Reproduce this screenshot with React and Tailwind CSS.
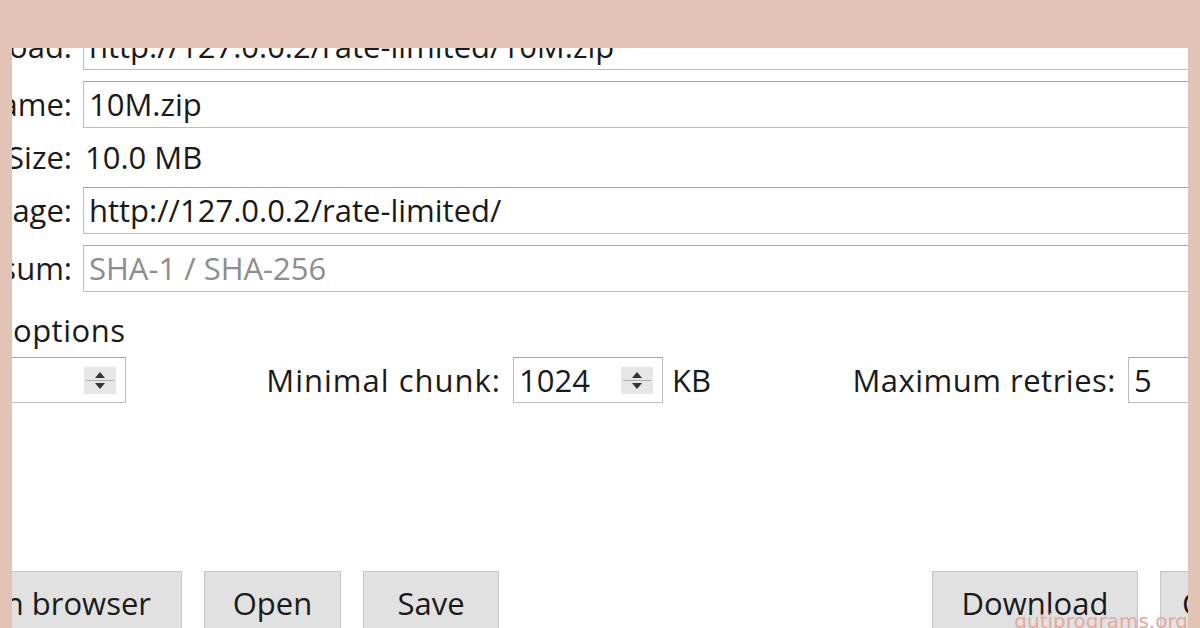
import React from 'react';

const font = { fontFamily: '"Open Sans", "Noto Sans", sans-serif' };

// little up/down arrows of a Windows spin box
const SpinArrows = () => (
  <svg width="32" height="27" viewBox="0 0 32 27" className="flex-none">
    <rect x="0" y="0" width="32" height="27" fill="#e6e6e6" />
    <line x1="2" y1="13.5" x2="30" y2="13.5" stroke="#b0b0b0" strokeWidth="1" />
    <path d="M11 11 L16 5 L21 11 Z" fill="#333" />
    <path d="M11 16 L21 16 L16 22 Z" fill="#333" />
  </svg>
);

const Field = ({ label, value, placeholder }) => (
  <div className="flex items-center h-[47px]">
    <div className="w-[160px] flex-none flex justify-end">
      <span className="whitespace-nowrap">{label}</span>
    </div>
    <div className="ml-[11px] flex-1 h-full flex items-center bg-white border border-[#bcbcbc] border-t-[#a5a5a5] pl-[5px]">
      {value ? (
        <span className="whitespace-nowrap text-[#1a1a1a]">{value}</span>
      ) : (
        <span className="whitespace-nowrap text-[#8d8d8d]">{placeholder}</span>
      )}
    </div>
  </div>
);

const SpinBox = ({ value, className }) => (
  <div className={`h-[46px] flex items-center justify-between border border-[#bcbcbc] border-t-[#a5a5a5] bg-white pl-[5px] pr-[9px] flex-none ${className}`}>
    <span className="text-[#1a1a1a]">{value}</span>
    <SpinArrows />
  </div>
);

const Button = ({ children, className }) => (
  <div className={`h-[70px] flex-none flex items-start pt-[16px] bg-[#e1e1e1] border border-[#c4c4c4] text-[#1a1a1a] ${className}`}>
    <span className="whitespace-nowrap">{children}</span>
  </div>
);

export default function App() {
  return (
    <div className="w-[1200px] h-[628px] bg-[#e1c4b6] flex flex-col overflow-hidden" style={font}>
      <div className="h-[48px] flex-none" />
      <div className="flex flex-1 min-h-0 w-[1200px]">
        <div className="w-[12px] flex-none" />
        <div className="relative flex-1 min-w-0 max-w-[1176px] h-full bg-white overflow-hidden text-[31px] leading-none text-[#1a1a1a]">
          <div className="w-[1400px] ml-[-100px] mt-[-25px] flex flex-col">
            <div className="flex flex-col gap-[11px]">
              <Field label="Download:" value="http://127.0.0.2/rate-limited/10M.zip" />
              <Field label="File name:" value="10M.zip" />
              <div className="flex items-center h-[37px]">
                <div className="w-[160px] flex-none flex justify-end">
                  <span className="whitespace-nowrap">Size:</span>
                </div>
                <span className="ml-[13px] whitespace-nowrap">10.0 MB</span>
              </div>
              <Field label="Page:" value="http://127.0.0.2/rate-limited/" />
              <Field label="Checksum:" placeholder="SHA-1 / SHA-256" />
            </div>

            {/* options group */}
            <div className="flex items-center h-[40px] mt-[18px]">
              <div className="w-[92px] flex-none flex justify-end">
                <span className="whitespace-nowrap">Advanced</span>
              </div>
              <span className="ml-[9px] whitespace-nowrap tracking-[0.5px]">options</span>
            </div>

            <div className="flex items-center mt-[7px]">
              <SpinBox value="8" className="w-[166px] ml-[48px]" />
              <div className="w-[375px] flex-none flex justify-end">
                <span className="whitespace-nowrap tracking-[1px]">Minimal chunk:</span>
              </div>
              <SpinBox value="1024" className="w-[150px] ml-[12px]" />
              <span className="ml-[9px] w-[40px] flex-none">KB</span>
              <div className="w-[404px] flex-none flex justify-end">
                <span className="whitespace-nowrap tracking-[0.5px]">Maximum retries:</span>
              </div>
              <SpinBox value="5" className="w-[150px] ml-[12px]" />
            </div>

            {/* dialog buttons */}
            <div className="flex mt-[168px]">
              <Button className="w-[250px] ml-[20px] justify-end pr-[30px]">Open in browser</Button>
              <Button className="w-[137px] ml-[22px] justify-center">Open</Button>
              <Button className="w-[136px] ml-[22px] justify-center">Save</Button>
              <Button className="w-[206px] ml-[433px] justify-center">Download</Button>
              <Button className="w-[140px] ml-[22px] justify-center">Cancel</Button>
            </div>
          </div>

          <span
            className="absolute right-[0px] bottom-[-3px] text-[20px] text-[#e2a99f] whitespace-nowrap"
            style={{ fontFamily: '"DejaVu Sans", sans-serif' }}
          >
            gutiprograms.org
          </span>
        </div>
        <div className="w-[12px] flex-none" />
      </div>
    </div>
  );
}
